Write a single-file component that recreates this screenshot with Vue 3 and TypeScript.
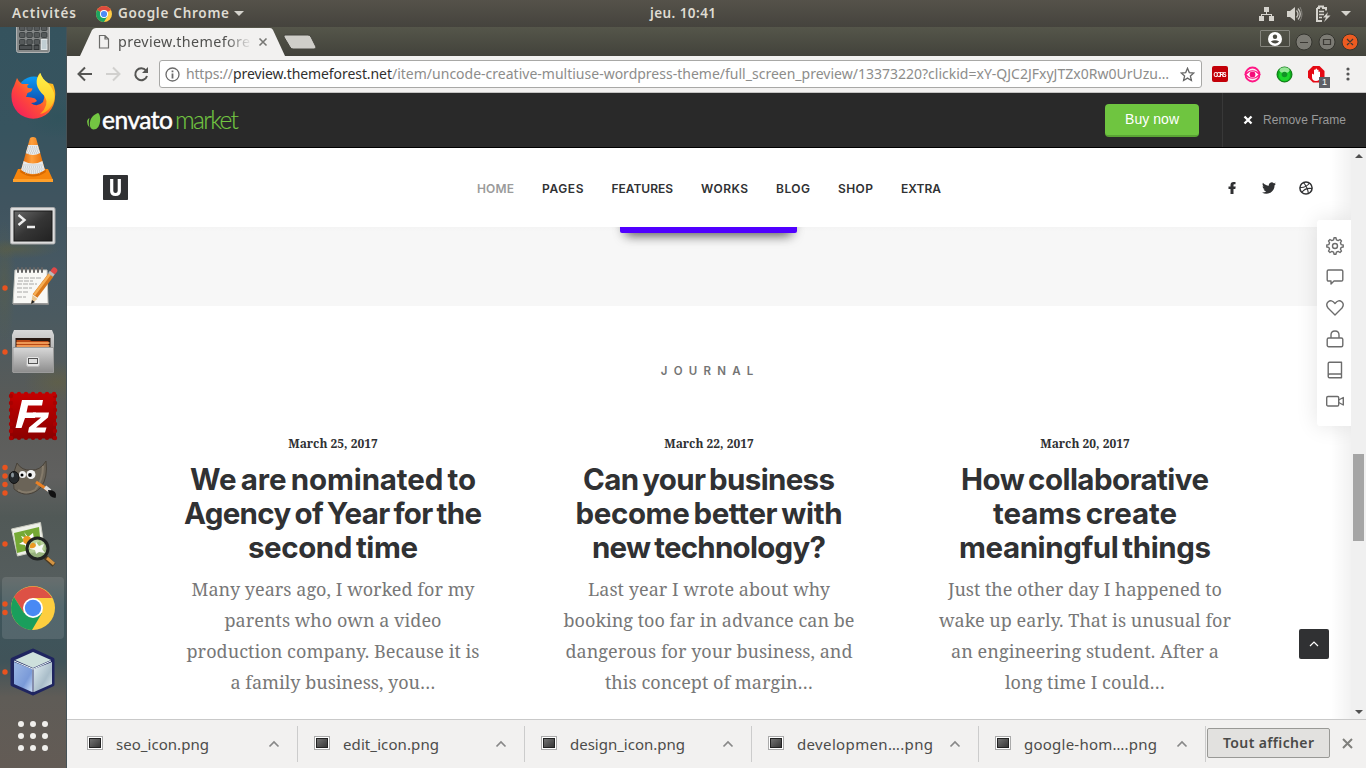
<script setup lang="ts">
import type { Directive } from 'vue'

interface Line { text: string; width: number }
interface Article { date: string; title: Line[]; excerpt: Line[] }

// Tracks a piece of text so that its ink spans the given number of pixels.
const vFit: Directive<HTMLElement, number> = {
  mounted(el, binding) {
    const count = (el.textContent ?? '').length
    if (count < 2) return
    const tracking = (binding.value - el.getBoundingClientRect().width) / (count - 1)
    el.style.letterSpacing = `${tracking}px`
    el.style.marginRight = `${-tracking}px`
  },
}

const l = (text: string, width: number): Line => ({ text, width })

const navItems: Line[] = [
  l('HOME', 37), l('PAGES', 41.5), l('FEATURES', 61.5), l('WORKS', 47),
  l('BLOG', 34), l('SHOP', 35), l('EXTRA', 40),
]

const articles: Article[] = [
  {
    date: 'March 25, 2017',
    title: [l('We are nominated to', 286), l('Agency of Year for the', 298), l('second time', 170)],
    excerpt: [l('Many years ago, I worked for my', 283), l('parents who own a video', 217), l('production company. Because it is', 293), l('a family business, you…', 205)],
  },
  {
    date: 'March 22, 2017',
    title: [l('Can your business', 252), l('become better with', 267), l('new technology?', 234)],
    excerpt: [l('Last year I wrote about why', 242), l('booking too far in advance can be', 291), l('dangerous for your business, and', 287), l('this concept of margin…', 208)],
  },
  {
    date: 'March 20, 2017',
    title: [l('How collaborative', 248), l('teams create', 184), l('meaningful things', 252)],
    excerpt: [l('Just the other day I happened to', 274), l('wake up early. That is unusual for', 292), l('an engineering student. After a', 268), l('long time I could…', 160)],
  },
]

const downloads: Line[] = [
  l('seo_icon.png', 93), l('edit_icon.png', 96), l('design_icon.png', 115),
  l('developmen….png', 136), l('google-hom….png', 133),
]

const calcKeys = [0, 1, 2, 3].flatMap((c) => [0, 1, 2].map((r) => ({ x: 19.5 + c * 7.3, y: 25.5 + r * 7 })))
const gridDots = [21, 33, 45].flatMap((x) => [20, 32, 44].map((y) => ({ x, y })))
const stampTeeth = [0, 1, 2, 3, 4, 5, 6].map((n) => 12 + n * 7)
</script>

<template>
  <div class="desktop">
    <header class="topbar">
      <div class="topbar-left">
        <span v-fit="64">Activités</span>
        <svg class="mini-chrome" width="16" height="16" viewBox="0 0 44 44">
          <circle cx="22" cy="22" r="22" fill="#fc4" />
          <path d="M22 22 3 11A22 22 0 0 1 41 11z" fill="#dd4b3e" />
          <path d="M22 22 3 11A22 22 0 0 0 22 44L32 27z" fill="#1da462" />
          <circle cx="22" cy="22" r="11" fill="#fff" /><circle cx="22" cy="22" r="8.5" fill="#4c8bf5" />
        </svg>
        <span v-fit="111">Google Chrome</span>
        <i class="tri"></i>
      </div>
      <div class="clock"><span v-fit="66">jeu. 10:41</span></div>
      <div class="tray">
        <svg width="17" height="16" viewBox="0 0 17 16" fill="#d5d3cd"><path d="M6 1h5v5H6zM1 10h5v5H1zM11 10h5v5h-5z" /><path d="M8 6h1v2h5v2h-1V9H4v1H3V8h5z" /></svg>
        <svg width="17" height="16" viewBox="0 0 17 16"><path d="M1 5h3l5-4v14l-5-4H1z" fill="#d5d3cd" /><path d="M10.5 4.5q3 3.500 0 7M12 2.500q4.500 5.500 0 11" fill="none" stroke="#c5c3bd" stroke-width="1.300" /><path d="M14 1q4 7 0 14" fill="none" stroke="#85837d" /></svg>
        <svg width="17" height="18" viewBox="0 0 17 18"><path d="M3 3h2V1.500h4V3h3v2.500M8 16H3V3" fill="none" stroke="#d5d3cd" stroke-width="2" /><path d="M5 6.500h5M5 9.500h5M5 12.500h3" stroke="#d5d3cd" stroke-width="1.500" /><path d="m14 7-5 5.500h3l-2 4.500 6.500-6.500h-3.500z" fill="#d5d3cd" /></svg>
        <i class="tri"></i>
      </div>
    </header>

    <div class="below">
      <nav class="dock">
        <svg width="0" height="0" class="defs">
          <defs>
            <linearGradient id="fox" x1="0" y1="1" x2="1" y2="0"><stop offset="0" stop-color="#ef1267" /><stop offset=".42" stop-color="#ff4b38" /><stop offset=".7" stop-color="#ff9a12" /><stop offset="1" stop-color="#ffe332" /></linearGradient>
            <linearGradient id="tail" x1="0" y1="0" x2="0" y2="1"><stop offset="0" stop-color="#fff14a" /><stop offset=".6" stop-color="#ffd52f" /><stop offset="1" stop-color="#ff9d16" /></linearGradient>
            <linearGradient id="globe" x1="0" y1="0" x2="0" y2="1"><stop offset="0" stop-color="#0a9cf5" /><stop offset="1" stop-color="#123b9e" /></linearGradient>
            <linearGradient id="cone"><stop offset="0" stop-color="#d95e00" /><stop offset=".45" stop-color="#ffa03d" /><stop offset="1" stop-color="#e56b00" /></linearGradient>
            <linearGradient id="steel" x1="0" y1="0" x2="0" y2="1"><stop offset="0" stop-color="#d8d8d8" /><stop offset="1" stop-color="#8c8c8c" /></linearGradient>
            <linearGradient id="screen" x1="0" y1="0" x2="1" y2="1"><stop offset="0" stop-color="#686868" /><stop offset=".5" stop-color="#353535" /><stop offset="1" stop-color="#222" /></linearGradient>
            <linearGradient id="picture" x1="0" y1="0" x2="1" y2="1"><stop offset="0" stop-color="#777" /><stop offset="1" stop-color="#333" /></linearGradient>
            <linearGradient id="stamp" x1="0" y1="0" x2="0" y2="1"><stop offset="0" stop-color="#c40000" /><stop offset="1" stop-color="#8c0000" /></linearGradient>
            <linearGradient id="cubeL" x1="0" y1="0" x2="1" y2="1"><stop offset="0" stop-color="#9db8e4" /><stop offset=".65" stop-color="#7a9ad8" /><stop offset="1" stop-color="#c9dcf4" /></linearGradient>
            <linearGradient id="cubeR" x1="0" y1="0" x2="1" y2="1"><stop offset="0" stop-color="#e2eef2" /><stop offset=".6" stop-color="#a9bdc9" /><stop offset="1" stop-color="#dce8ec" /></linearGradient>
          </defs>
        </svg>
        <!-- calculator -->
        <svg class="app" viewBox="0 0 67 64"><rect x="16.500" y="10" width="33" height="42.500" rx="2" fill="#858888" stroke="#b1b3b3" /><rect v-for="(k, i) in calcKeys" :key="i" :x="k.x" :y="k.y" width="5.500" height="5" rx="1" fill="#55595a" stroke="#34393a" stroke-width=".8" /><rect x="19.500" y="45.500" width="12.500" height="4" fill="#4c5052" stroke="#303435" /><rect x="34" y="45.500" width="5" height="4" fill="#4c5052" stroke="#303435" /><rect x="41.400" y="39.500" width="5.500" height="10" fill="#c0cdd2" stroke="#e0e6e8" /></svg>
        <!-- Firefox -->
        <svg class="app" viewBox="0 0 67 64">
          <circle cx="34" cy="29" r="16.500" fill="url(#globe)" />
          <path d="M17 14Q18 17 22 20L29 20Q26 22 28 24L32.500 24.500Q32 28 27.500 29L26 33Q30 32.500 35 34.500L37 37Q35 39 31 39Q37 44 43 38Q47 31 38 19Q36 13 40 9Q42 15 48 19L53 20Q56 27 55 33A21.700 21.700 0 0 1 11.500 33Q11 27 14 22z" fill="url(#fox)" />
          <path d="M40.500 9Q42 15 48 19Q60 32 50 44Q46 49 40 50Q50 41 44.500 32Q31 20 40.500 9z" fill="url(#tail)" />
        </svg>
        <!-- VLC -->
        <svg class="app" viewBox="0 0 67 64"><path d="M18 41h30l5 11H13z" fill="#f6850c" /><path d="M13 51h40v3H13z" fill="#ffa02a" /><path d="M20 44q13 9 26 0l-1-4H21z" fill="#d96a00" /><path d="M30 10q3-2 6 0l9 32q-12 9-24 0z" fill="url(#cone)" /><path d="m28.200 17 9.600 0 2.400 8q-7.200 4-14.400 0zM23.600 33q9.400 5 18.800 0l2.500 9q-12 8-23.800 0z" fill="#e8eaeb" /><path d="M28 19h10M27.500 21h11M27 23h12M26 25h14M23.500 37h19M23 39h20M22.500 41h21M23 43h20M25 45h16" stroke="#b9bebf" stroke-dasharray="1 1" /></svg>
        <!-- terminal -->
        <svg class="app" viewBox="0 0 67 64"><rect x="10.500" y="15.500" width="44.500" height="36.500" rx="1.500" fill="#ddd" stroke="#a9a9aa" /><rect x="14" y="19" width="38" height="30" fill="url(#screen)" stroke="#191919" /><path d="m18.500 23 6 5-6 5M27 35h8" fill="none" stroke="#eee" stroke-width="2.400" /></svg>
        <!-- text editor -->
        <svg class="app" viewBox="0 0 67 64"><path d="M15 14h32l1 34q-17-1-35 0z" fill="#f8f8f5" stroke="#c8c8c2" /><path d="M13 48h36" stroke="#888" stroke-width="1.500" /><path d="M18 12v4m4-4v4m4-4v4m4-4v4m4-4v4m4-4v4m4-4v4" stroke="#646464" stroke-width="2" stroke-linecap="round" /><path d="M18 22h24M18 25h15M17 28h20M17 32h15M17 36h12M17 41h9" stroke="#a8a8a6" stroke-dasharray="5 1" /><path d="M35 40 51 19" stroke="#d9781c" stroke-width="6" /><path d="M34 39 50 18" stroke="#f6ae54" stroke-width="2.500" /><path d="m31 48 1.500-9 5 4z" fill="#e8c590" /><path d="m31 48 1-4 3 2z" fill="#222" /><path d="m53.500 15.500.8-1" stroke="#e04848" stroke-width="6" stroke-linecap="round" /><path d="m50.500 19 1.800-2.400" stroke="#bbb" stroke-width="6" /></svg>
        <!-- files -->
        <svg class="app" viewBox="0 0 67 64"><path d="M14 10h38l2 5v37H12V15z" fill="url(#steel)" /><path d="M15.500 18h35v11h-35z" fill="#271812" /><path d="M16.500 20h13l2 1h17v7h-32z" fill="#b94916" /><path d="M16.500 23h33M16.500 26h33" stroke="#ffb36b" stroke-width="1.500" /><path d="M13 27.500h40.500V52.500H13z" fill="url(#steel)" stroke="#9b9b9b" /><rect x="26.500" y="36.500" width="13" height="10" rx="2" fill="#e5e5e5" stroke="#bbb" /><rect x="28.500" y="38.500" width="9" height="5" fill="#ddd" stroke="#555" /></svg>
        <!-- FileZilla -->
        <svg class="app" viewBox="0 0 67 64"><rect x="10" y="9.500" width="46" height="45" fill="url(#stamp)" /><template v-for="t in stampTeeth" :key="t"><circle :cx="t" cy="10" r="2.200" fill="#c00000" /><circle :cx="t" cy="53.800" r="2.200" fill="#900000" /><circle cx="11" :cy="t" r="2.200" fill="#a90000" /><circle cx="55" :cy="t" r="2.200" fill="#a90000" /></template><path d="M22 16h21l-1 5.500H28l-1.500 7H36l-1 5.500H25l-3.500 10h-6z" fill="#fff" /><path d="M33 28.500h16l-1 5-12 10h10.500l-1.500 5H28l1-5 12-10h-9z" fill="#fff" /></svg>
        <!-- GIMP -->
        <svg class="app" viewBox="0 0 67 64"><path d="M17 15q5 8 14 7Q40 23 46 13q2 17-5 26-7 8-17 7-6-1-10-5l-1-14z" fill="#6b6458" stroke="#484239" /><path d="M43 18q0 14-8 24-9 5-17 0" fill="none" stroke="#857b6b" stroke-width="2" /><ellipse cx="14" cy="29.500" rx="5" ry="6" fill="#25292c" stroke="#111" /><ellipse cx="12.500" cy="27" rx="1.500" ry="2.500" fill="#88949a" /><circle cx="22.500" cy="26.500" r="3.500" fill="#f2f2f2" /><circle cx="31" cy="26.500" r="4.500" fill="#f2f2f2" /><circle cx="22" cy="27" r="1.500" /><circle cx="30" cy="27" r="1.900" /><path d="m36 34 12 8" stroke="#e98125" stroke-width="3" /><path d="m45 39 5 4" stroke="#ddd" stroke-width="4" /><path d="M48 42q10 0 7.500 8-7-1-7.500-8z" fill="#111" /></svg>
        <!-- image viewer -->
        <svg class="app" viewBox="0 0 67 64"><path d="m11.500 17 29-6.500 4 27-27 6.500z" fill="#eef0e8" stroke="#c9cabf" /><path d="m14 21 25-6 2 20-24 6z" fill="#75a935" /><path d="m24 20 4 5 5-4 1 6 6 2-5 3 2 5-6-2-4 4-2-6-6-1 5-3-3-5 6 2z" fill="#fff" /><circle cx="27" cy="28" r="4" fill="#eb9a23" /><path d="m45 45 9 8" stroke="#4b3a21" stroke-width="4.500" /><path d="m47 46 7 6" stroke="#d49443" stroke-width="3" /><circle cx="37.500" cy="36.500" r="10.500" fill="#a8c884" fill-opacity=".8" stroke="#202322" stroke-width="3" /><path d="m31 33 4 2 1-5 3 4 5-2-2 5 3 4-6-1-3 2-1-4-5-1z" fill="#fff" opacity=".9" /><path d="M30 33q3-5 6 0-1 4-6 3z" fill="#eb9a23" /></svg>
        <!-- Chrome -->
        <svg class="app" viewBox="0 0 67 64"><rect x="2" y="1" width="62" height="62" rx="4" fill="#fff" opacity=".11" /><g transform="translate(11 10)"><circle cx="22" cy="22" r="22" fill="#fdce3f" /><path d="M22 12h19A22 22 0 0 0 3 11L13 27z" fill="#dd5145" /><path d="M3 11a22 22 0 0 0 18 33L31 27 13 27z" fill="#1a9e5c" /><circle cx="22" cy="22" r="10" fill="#fff" /><circle cx="22" cy="22" r="8.200" fill="#4889f4" /></g></svg>
        <!-- NetBeans -->
        <svg class="app" viewBox="0 0 67 64"><path d="m33 10.500 19.500 9v25L33 53.500 12.500 44.500v-25z" fill="#1f2560" stroke="#1f2560" stroke-width="4" stroke-linejoin="round" /><path d="m33 12 18 8-18 8-18-8z" fill="#cde0dc" /><path d="m14 22 18 7v23l-18-8z" fill="url(#cubeL)" /><path d="m34 29 18-7v22l-18 8z" fill="url(#cubeR)" /><path d="m14 21 19 8 18-8M33 29v23" stroke="#edf8fa" fill="none" /></svg>
        <!-- applications grid -->
        <svg class="app" viewBox="0 0 67 64"><circle v-for="(d, i) in gridDots" :key="i" :cx="d.x" :cy="d.y" r="3" fill="#f0efec" /></svg>
        <svg class="marks" width="10" height="741" viewBox="0 0 10 741" fill="#e9531f"><circle cx="5" cy="261" r="2.700" /><circle cx="5" cy="325" r="2.700" /><circle cx="5" cy="440.500" r="2.700" /><circle cx="5" cy="449" r="2.700" /><circle cx="5" cy="457.500" r="2.700" /><circle cx="5" cy="466" r="2.700" /><circle cx="5" cy="517" r="2.700" /><circle cx="5" cy="577" r="2.700" /><circle cx="5" cy="585.500" r="2.700" /><circle cx="5" cy="645" r="2.700" /></svg>
      </nav>

      <main class="browser">
        <div class="tabstrip">
          <svg class="tab-shape" width="270" height="29" viewBox="0 0 270 29"><path d="M13 29 25 3Q26.500 1 29 1H203Q205 1 206 3L218 29z" fill="#f2f1f0" /><path d="M218 8H241Q243 8 244 10L249 20Q249 22 247 22H226Q224 22 223 20L217 10Q216.500 8 218 8z" fill="#cfcec9" stroke="#45453e" /><path d="M32.500 8.500h5.500l3.500 3.500v9H32.500zM38 8.500V12h3.500" fill="none" stroke="#6c6c6a" stroke-width="1.200" /><path d="m192.500 11.500 7 7m0-7-7 7" stroke="#777774" stroke-width="1.600" /></svg>
          <span class="tab-title"><span v-fit="132">preview.themefore</span></span>
          <div class="window-controls">
            <span class="profile"><svg width="14" height="14" viewBox="0 0 14 14"><circle cx="7" cy="7" r="7" fill="#fff" /><circle cx="7" cy="4.700" r="2.200" fill="#4b4b43" /><path d="M2.800 9.500q4.200-2.500 8.400 0-4 4-8.400 0z" fill="#4b4b43" /></svg></span>
            <svg width="64" height="18" viewBox="0 0 64 18"><g stroke="#35352f"><circle cx="9" cy="9" r="8" fill="#7c7b74" /><circle cx="32" cy="9" r="8" fill="#7c7b74" /><circle cx="55" cy="9" r="8" fill="#ec5b21" /></g><path d="M5 9.500h8M28.500 6.500h7v5h-7zM52 6l6 6m0-6-6 6" fill="none" stroke="#3b3934" stroke-width="1.200" /></svg>
          </div>
        </div>

        <div class="toolbar">
          <svg class="nav-icons" width="86" height="20" viewBox="0 0 86 20" fill="none" stroke-width="2"><path d="M25 10H11.500m6.500-6.500L11.500 10l6.500 6.500" stroke="#555553" /><path d="M39 10h13M46 3.500l6.500 6.500-6.500 6.500" stroke="#d1d0ce" /><path d="M79 6.500A6 6 0 1 0 80 12" stroke="#555553" /><path d="M81 3v6h-6z" fill="#555553" /></svg>
          <div class="address">
            <svg width="15" height="15" viewBox="0 0 15 15"><circle cx="7.500" cy="7.500" r="6.500" fill="none" stroke="#6b6b6b" stroke-width="1.300" /><path d="M7.500 6.500v5M7.500 3.500v1.800" stroke="#6b6b6b" stroke-width="1.800" /></svg>
            <span class="url"><span v-fit="47">https://</span><span class="host" v-fit="159">preview.themeforest.net</span><span v-fit="777">/item/uncode-creative-multiuse-wordpress-theme/full_screen_preview/13373220?clickid=xY-QJC2JFxyJTZx0Rw0UrUzu…</span></span>
            <svg class="star" width="15" height="15" viewBox="0 0 15 15"><path d="m7.500 1.300 1.800 4.300 4.500.4-3.400 3 1 4.500-3.900-2.400-3.900 2.400 1-4.500-3.400-3 4.500-.4z" fill="none" stroke="#666" stroke-width="1.300" /></svg>
          </div>
          <div class="extensions">
            <span class="cors"><span v-fit="13">CORS</span></span>
            <svg width="17" height="17" viewBox="0 0 17 17"><circle cx="8.500" cy="8.500" r="7" fill="none" stroke="#ff1685" stroke-width="1.800" /><path d="M.3 8.500Q8.500 0 16.700 8.500 8.500 17 .3 8.500" fill="#ff1685" /><path d="M2.500 8.500Q8.500 1.500 14.500 8.500 8.500 15.500 2.500 8.500" fill="#fff" /><circle cx="8.500" cy="8.500" r="2.900" fill="#f40b79" /></svg>
            <svg class="green" width="17" height="17" viewBox="0 0 17 17"><circle cx="8.500" cy="8.500" r="7.500" fill="#0fae1c" stroke="#08740f" /><circle cx="8.500" cy="9.500" r="5.500" fill="#1ed62c" /><ellipse cx="8.500" cy="4.200" rx="5" ry="3" fill="#b8f4b6" opacity=".8" /><circle cx="8.500" cy="8.500" r="2.800" fill="#129325" /></svg>
            <span class="adblock"><svg width="22" height="24" viewBox="0 0 22 24"><path d="M5 0h6.500l5 5v6.500l-5 5H5l-5-5V5z" fill="#e50914" /><path d="M4 8q1-1 2 1V4q1-1 1.500 0v3-4q1-1 1.500 0v4-3q1-1 1.500 0v4-2q1-1 1.500 0v5q0 4-4 4t-4-4z" fill="#fff" /></svg><b>1</b></span>
            <svg width="4" height="16" viewBox="0 0 4 16" fill="#555"><circle cx="2" cy="3" r="1.600" /><circle cx="2" cy="8" r="1.600" /><circle cx="2" cy="13" r="1.600" /></svg>
          </div>
        </div>

        <div class="envato">
          <div class="logo">
            <svg width="14" height="17" viewBox="0 0 14 17"><path d="M11 0Q13.300 1 13.200 7.500 12.500 16.500 6.500 16.500 2.600 16 2.800 10 3.500 4 8 1.500 10 .2 11 0z" fill="#73c642" /><path d="M2.500 14.500Q-.6 11 .3 7.500 .8 5.500 2.500 5 1 9 2.500 14.500z" fill="#73c642" /></svg>
            <span class="word" v-fit="71">envato</span><span class="word market" v-fit="64">market</span>
          </div>
          <div class="frame-actions">
            <span class="buy"><span v-fit="54">Buy now</span></span>
            <span class="remove"><svg width="10" height="10" viewBox="0 0 10 10"><path d="m1.500 1.500 7 7m0-7-7 7" stroke="#fff" stroke-width="2.300" /></svg><span v-fit="83">Remove Frame</span></span>
          </div>
        </div>

        <section class="viewport">
          <div class="page">
            <header class="site-header">
              <svg class="brand" width="25" height="25" viewBox="0 0 25 25"><rect width="25" height="25" rx=".8" fill="#303133" /><path d="M8.700 4v12q0 3.500 3.800 3.500t3.800-3.500V4" fill="none" stroke="#fff" stroke-width="3.200" /></svg>
              <nav class="menu"><span v-for="item in navItems" :key="item.text" class="menu-item" :class="{ active: item.text === 'HOME' }"><span v-fit="item.width">{{ item.text }}</span></span></nav>
              <div class="social">
                <svg width="14" height="14" viewBox="0 0 14 14"><path d="M5.500 13V8h-2V5.500h2V4q0-3 3-3h2v2.300H9.100Q8.500 3.300 8.500 4v1.500h2.200L10.300 8H8.500v5z" fill="#303133" /></svg>
                <svg width="14" height="14" viewBox="0 0 24 24"><path d="M23.950 4.570a10 10 0 0 1-2.820.77 4.960 4.960 0 0 0 2.160-2.720c-.95.550-2 .95-3.130 1.180a4.920 4.920 0 0 0-8.380 4.480C7.690 8.090 4.070 6.130 1.640 3.160a4.820 4.820 0 0 0-.67 2.480c0 1.710.87 3.210 2.190 4.100a4.900 4.900 0 0 1-2.230-.620v.060a4.920 4.920 0 0 0 3.950 4.830 5 5 0 0 1-2.210.080 4.940 4.940 0 0 0 4.600 3.420A9.870 9.870 0 0 1 0 19.540a14 14 0 0 0 7.550 2.210c9.050 0 14-7.500 14-13.980 0-.21 0-.42-.015-.63a10 10 0 0 0 2.460-2.550z" fill="#303133" /></svg>
                <svg width="14" height="14" viewBox="0 0 14 14" fill="none" stroke="#303133" stroke-width="1.150"><circle cx="7" cy="7" r="6.100" stroke-width="1.500" /><path d="M1 6.500Q7 7 10.500 2M4.500 1.500Q9 7 9.300 12.500M3 11.300Q6 6.500 13 7.500" /></svg>
              </div>
            </header>
            <div class="band"><div class="purple"></div></div>
            <div class="journal">
              <h4><span v-fit="92.5">JOURNAL</span></h4>
              <div class="columns">
                <article v-for="article in articles" :key="article.date">
                  <time><span v-fit="89.5">{{ article.date }}</span></time>
                  <h3><span v-for="line in article.title" :key="line.text" class="row"><span v-fit="line.width">{{ line.text }}</span></span></h3>
                  <p><span v-for="line in article.excerpt" :key="line.text" class="row"><span v-fit="line.width">{{ line.text }}</span></span></p>
                </article>
              </div>
            </div>
            <div class="edge-shade"></div>
            <aside class="tools">
              <svg viewBox="0 0 18 18"><path d="M7.600 2.800 8 .8h2l.4 2 1.800.8L14 2.500 15.500 4l-1.100 1.800.8 1.800 2 .4v2l-2 .4-.8 1.800L15.500 14 14 15.500l-1.800-1.100-1.800.8-.4 2H8l-.4-2-1.800-.8L4 15.500 2.500 14l1.100-1.800-.8-1.800-2-.4V8l2-.4.8-1.800L2.500 4 4 2.500l1.800 1.100z" /><circle cx="9" cy="9" r="2.500" /></svg>
              <svg viewBox="0 0 18 18"><path d="M2.500 2h13q1.300 0 1.300 1.300v8.400q0 1.300-1.300 1.300H8l-3 3v-3H2.500Q1.200 13 1.200 11.700V3.300Q1.200 2 2.500 2z" /></svg>
              <svg viewBox="0 0 18 18"><path d="m9 16-7-7Q-.5 5.500 2 3q3.500-3 7 1.500Q12.500 0 16 3q2.500 2.500 0 6z" /></svg>
              <svg viewBox="0 0 18 18"><rect x="1.200" y="8" width="15.600" height="8.800" rx="1.500" /><path d="M5 8V5q0-4 4-4t4 4v3" /></svg>
              <svg viewBox="0 0 18 18"><path d="M3.500 1.200h12v15.600h-12Q2.200 16.800 2.200 15.400V2.600q0-1.400 1.300-1.400zM15.500 13h-12Q2.200 13 2.200 15" /></svg>
              <svg viewBox="0 0 18 18"><rect x=".7" y="4.500" width="12" height="9.500" rx="1.300" /><path d="m12.700 8 4.600-2.500v7.500l-4.600-2.500" /></svg>
            </aside>
            <div class="to-top"><svg width="10" height="6" viewBox="0 0 10 6"><path d="m1 5 4-4 4 4" fill="none" stroke="#fff" stroke-width="1.200" /></svg></div>
          </div>
          <div class="scrollbar"><i class="up"></i><div class="thumb"></div><i class="down"></i></div>
        </section>

        <footer class="downloads">
          <div v-for="file in downloads" :key="file.text" class="file">
            <svg width="16" height="14" viewBox="0 0 16 14"><rect x=".5" y=".5" width="15" height="13" fill="#fff" stroke="#aaa" /><rect x="2.500" y="2.500" width="11" height="9" fill="url(#picture)" stroke="#222" /></svg>
            <span class="filename"><span v-fit="file.width">{{ file.text }}</span></span>
            <svg class="caret" width="12" height="8" viewBox="0 0 12 8"><path d="m1.500 6.500 4.500-4.500 4.500 4.500" fill="none" stroke="#888" stroke-width="1.700" /></svg>
          </div>
          <span class="show-all"><span v-fit="91">Tout afficher</span></span>
          <svg class="dismiss" width="11" height="11" viewBox="0 0 11 11"><path d="m1 1 9 9m0-9-9 9" stroke="#80807d" stroke-width="2" /></svg>
        </footer>
      </main>
    </div>
  </div>
</template>

<style>
body { margin: 0; overflow: hidden; }
</style>

<style scoped>
* { box-sizing: border-box; }
svg { display: block; flex: none; }
span { white-space: nowrap; }
span > span, .topbar span, .url > span, .word, h4 > span { display: inline-block; }
.desktop { width: 1366px; height: 768px; overflow: hidden; display: flex; flex-direction: column; font-family: "Noto Sans", "Open Sans", sans-serif; background: #fff; }
.topbar { height: 27px; flex: none; display: grid; grid-template-columns: 650px 66px 1fr; align-items: center; color: #dfdbd2; font-size: 13.5px; font-weight: 600; line-height: 27px; background: linear-gradient(#55524a, #45433d); }
.topbar-left { display: flex; align-items: center; padding-left: 12px; }
.clock { white-space: nowrap; }
.mini-chrome { margin: 0 6px 0 20px; }
.tri { width: 0; height: 0; border: 5px solid transparent; border-top-color: #d5d3cd; border-bottom: 0; margin-left: 5px; }
.tray { display: flex; justify-content: flex-end; align-items: center; gap: 11px; padding-right: 15px; }
.tray .tri { margin-left: -1px; }
.below { flex: 1; min-height: 0; display: flex; }
.dock { width: 67px; flex: none; position: relative; overflow: hidden; border-right: 1px solid #465257; background: radial-gradient(ellipse 34px 22px at 58px 90px, #31535c, transparent), radial-gradient(ellipse 45px 10px at 15px 222px, rgba(107, 99, 50, .4), transparent), radial-gradient(ellipse 12px 62px at 4px 255px, rgba(107, 99, 50, .3), transparent), radial-gradient(ellipse 34px 20px at 58px 355px, rgba(110, 102, 46, .35), transparent), linear-gradient(#35535e 0, #37545f 100px, #40545f 180px, #475963 245px, #4b5a60 290px, #5a5b58 380px, #60605f 450px, #515957 490px, #555d5d 550px, #3e555b 580px, #405359 635px, #5f5c57 670px, #635b55 741px); }
.defs { position: absolute; }
.app { width: 67px; height: 64px; }
.dock .defs + .app { margin-top: -27px; }
.marks { position: absolute; left: 0; top: 0; }
.browser { flex: 1; min-width: 0; display: flex; flex-direction: column; background: #fff; }
.tabstrip { height: 29px; flex: none; background: linear-gradient(#55564a, #42423b); display: flex; position: relative; }
.tab-title { position: absolute; left: 51px; top: 1px; width: 134px; overflow: hidden; color: #50504e; font-size: 14.3px; line-height: 28px; -webkit-mask-image: linear-gradient(90deg, #000 80%, transparent); mask-image: linear-gradient(90deg, #000 80%, transparent); }
.window-controls { margin-left: auto; display: flex; align-items: flex-start; padding: 3px 7px 0 0; gap: 5px; }
.window-controls > svg { margin-top: 3px; }
.profile { width: 30px; height: 17px; border: 1px solid #85857d; border-radius: 1px; display: flex; justify-content: center; align-items: center; }
.toolbar { height: 37px; flex: none; background: #f2f1f0; border-bottom: 1px solid #c4c3c2; display: flex; align-items: center; padding-right: 16px; }
.nav-icons { width: 86px; }
.address { margin-left: 6px; width: 1043px; height: 28px; background: #fff; border: 1px solid #a8a8a6; border-radius: 3px; display: flex; align-items: center; padding: 0 6px 0 5px; }
.url { margin-left: 6px; font-size: 14px; color: #8d8d8b; line-height: 26px; width: 984px; display: flex; }
.host { color: #30302e; }
.star { margin-left: auto; }
.extensions { flex: 1; display: flex; align-items: center; justify-content: space-between; padding-left: 10px; }
.green { margin-left: -1px; }
.cors { width: 16px; height: 16px; border-radius: 2px; background: #c30008; color: #fff; display: flex; align-items: center; justify-content: center; font: 700 6px/16px "Liberation Sans", sans-serif; }
.cors span { transform: scaleY(1.25); }
.adblock { position: relative; width: 22px; height: 17px; margin-left: -1px; }
.adblock b { position: absolute; left: 11px; top: 11px; width: 11px; height: 11px; background: #5e5f65; color: #fff; text-align: center; font: 9px/11px "Liberation Sans", sans-serif; }
.envato { height: 55px; flex: none; background: #292929; border-bottom: 1px solid #000; display: flex; justify-content: space-between; }
.logo { display: flex; align-items: center; padding-left: 20px; height: 54px; }
.logo svg { margin-top: 2px; }
.word { font: 400 24.5px/30px Lato, sans-serif; color: #fff; -webkit-text-stroke: .5px #fff; margin-left: 1px; height: 30px; }
.logo .market { font-weight: 300; color: #73c642; -webkit-text-stroke: .15px #73c642; margin-left: 2px; }
.frame-actions { display: flex; font-family: "Liberation Sans", sans-serif; }
.buy { width: 94px; height: 33px; margin: 11px 23px 0 0; border-radius: 4px; background: #6fc540; border-bottom: 2px solid #5aa334; color: #fff; font-size: 14px; line-height: 30px; text-align: center; }
.remove { width: 144px; border-left: 1px solid #383838; display: flex; align-items: center; padding-left: 20px; gap: 10px; font-size: 12px; color: #999; }
.viewport { flex: 1; min-height: 0; display: flex; }
.page { width: 1284px; position: relative; overflow: hidden; color: #303133; }
.site-header { height: 79px; display: flex; align-items: center; padding: 0 38px 0 36px; background: #fff; }
.menu { display: flex; gap: 28px; margin-left: 349px; font: 600 12px/18px Inter, sans-serif; padding-top: 3px; }
.menu-item { display: flex; }
.active { color: #9b9b9b; }
.social { margin-left: auto; display: flex; gap: 23px; padding-top: 1px; }
.band { height: 79px; display: flex; align-items: flex-start; background: linear-gradient(#f4f4f4, #f7f7f7 5px); overflow: hidden; }
.purple { width: 177px; height: 46px; margin: -40px 0 0 553px; background: #5000ff; border-radius: 2px; box-shadow: 0 8px 12px -6px rgba(0, 0, 0, .6), 0 4px 14px -4px rgba(0, 0, 0, .2); }
.journal h4 { margin: 55px 4px 0 0; display: flex; justify-content: center; color: #747474; font: 600 11.5px/20px Inter, sans-serif; }
.columns { display: grid; grid-template-columns: repeat(3, 376px); justify-content: center; margin-top: 53px; }
article { text-align: center; }
time { display: block; font: 700 12px/20px "Noto Serif", "DejaVu Serif Condensed", "DejaVu Serif", serif; }
h3 { margin: 8px 0 0; font: 700 29.5px/34px Inter, sans-serif; word-spacing: -2.5px; }
p { margin: 10px 0 0; color: #777; font: 18px/31px "Noto Serif", "DejaVu Serif Condensed", "DejaVu Serif", serif; }
.row { display: flex; justify-content: center; }
.edge-shade { position: absolute; top: 0; right: 0; bottom: 0; width: 20px; background: linear-gradient(90deg, transparent, rgba(0, 0, 0, .05)); }
.tools { position: absolute; top: 72px; right: 0; width: 34px; height: 206px; background: #fff; border-radius: 3px 0 0 3px; box-shadow: 0 0 22px rgba(0, 0, 0, .11); display: flex; flex-direction: column; align-items: center; gap: 13px; padding: 16.5px 0 0 2px; }
.tools svg { width: 18px; height: 18px; fill: none; stroke: #6c6c6c; stroke-width: 1.4; stroke-linejoin: round; }
.to-top { position: absolute; right: 22px; bottom: 60px; width: 30px; height: 30px; border-radius: 2px; background: #303133; display: flex; align-items: center; justify-content: center; }
.scrollbar { width: 15px; background: #f0f0f0; display: flex; flex-direction: column; align-items: center; }
.up, .down { width: 0; height: 0; border: 4px solid transparent; }
.up { border-bottom-color: #505050; border-top: 0; margin-top: 6px; }
.down { border-top-color: #505050; border-bottom: 0; margin: auto 0 5px; }
.thumb { width: 11px; height: 87px; margin-top: 296px; background: #a5a5a5; }
.downloads { height: 49px; flex: none; border-top: 1px solid #c9c9c9; background: #f2f1f0; display: flex; padding-left: 4px; }
.file { width: 227px; height: 36px; margin-top: 6px; border-right: 1px solid #ccc; display: flex; align-items: flex-start; padding: 10px 17px 0 16px; }
.filename { margin: -2px 0 0 13px; font-size: 15px; line-height: 21px; color: #4c4c4a; }
.caret { margin: 4px 0 0 auto; }
.show-all { width: 123px; height: 30px; margin: 8px 0 0 1px; border: 1px solid #999996; border-radius: 2px; background: #e2e1df; color: #4a4a48; text-align: center; font-size: 14px; font-weight: 600; line-height: 28px; }
.dismiss { margin: 18px 0 0 12px; }
</style>
